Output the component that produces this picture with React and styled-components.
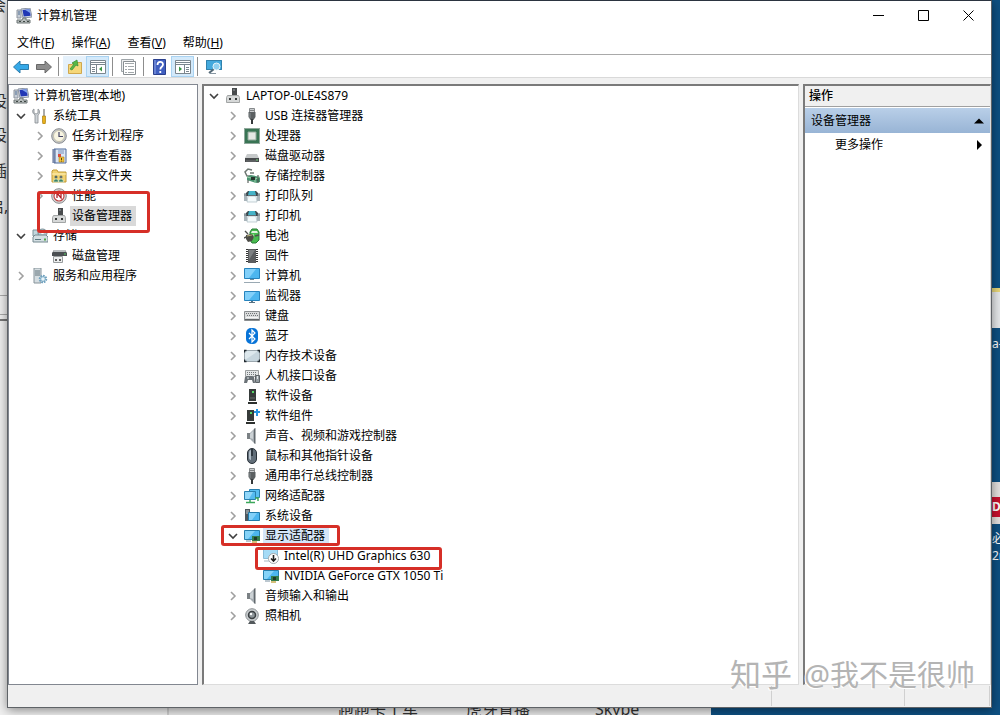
import React, { useState } from 'react'
import styled, { createGlobalStyle, css } from 'styled-components'

const GlobalStyle = createGlobalStyle`
  * {
    box-sizing: border-box;
  }

  body {
    margin: 0;
    overflow: hidden;
    color: #000;
    font-family: 'Noto Sans', 'Noto Sans CJK SC', sans-serif;
    font-size: 12px;
    line-height: 20px;
  }

  button {
    border: 0;
    padding: 0;
    background: none;
    color: inherit;
    font: inherit;
  }
`

// 16x16 drawings, shared by the trees, the toolbar and the title bar
const drawings = {
  computer: (
    <>
      <path d="M5 1l9-1 2 9-9 1z" fill="#d5dbe3" stroke="#8b95a5" />
      <path d="M6.500 2l7-.8 1.200 6.600-7 .8z" fill="#2137b5" />
      <path d="M9 1.800l4.500-.6 1 4z" fill="#7ea2ee" />
      <path d="M1 2h4v8H1z" fill="#c7ced7" stroke="#8d949e" />
      <path d="M2 4h2M2 6h2" stroke="#4f6d91" />
      <path d="M1 12h5l1-2h3v2h4v3H1z" fill="#b7bdbd" stroke="#6f7776" />
      <path d="M3 13.500h2M7 13.500h2M11 13.500h2" stroke="#404945" />
    </>
  ),
  tools: (
    <>
      <path
        d="M2 1v4l2 1 2-1V1c2 1 2 5 0 6v8H3V7C0 5 0 2 2 1z"
        fill="#cfd4d8"
        stroke="#868c91"
        strokeWidth=".8"
      />
      <path d="M11 1h2v8h-2z" fill="#aaa" />
      <path d="M10.500 8h3v6l-.5 2h-2l-.5-2z" fill="#e8b01c" stroke="#a97f12" strokeWidth=".7" />
    </>
  ),
  clock: (
    <>
      <circle cx="8" cy="8" r="7.300" fill="#c4c8cb" stroke="#8a8c8f" />
      <circle cx="8" cy="8" r="5.500" fill="#f8f5e2" stroke="#b9b39b" strokeWidth=".7" />
      <path d="M8 4v4.500h4" fill="none" stroke="#446" strokeWidth="1.200" />
    </>
  ),
  events: (
    <>
      <path d="M3 1h12v14H3z" fill="#dbe6f4" stroke="#4e6b9c" />
      <path d="M1 2h4M1 4h4M1 6h4M1 8h4M1 10h4M1 12h4M1 14h4" stroke="#53648d" />
      <path d="M7 3h6M7 5h6" stroke="#7890ba" />
      <path d="M7 6h3v3H7z" fill="#dc4b3b" />
      <path d="M8 9h5v5H8z" fill="#f1c53e" stroke="#ad7e1d" strokeWidth=".6" />
      <path d="M10.500 10v2M10.500 12.700v.8" stroke="#5b4312" />
    </>
  ),
  share: (
    <>
      <path d="M1 3l1-1h4l1 2h8v10H1z" fill="#f1d270" stroke="#c29b35" />
      <path d="M1 6h14" stroke="#fff2bd" />
      <circle cx="5" cy="9" r="1.500" fill="#546c63" />
      <circle cx="10" cy="9" r="1.500" fill="#65716d" />
      <path d="M2.500 14c0-4 5-4 5 0zM7.500 14c0-4 5-4 5 0z" fill="#398269" stroke="#dce9c9" strokeWidth=".7" />
    </>
  ),
  perf: (
    <>
      <circle cx="8" cy="8" r="7.300" fill="#d7d7d7" stroke="#8a8c8f" />
      <circle cx="8" cy="8" r="5" fill="#fff" stroke="#c04545" strokeWidth="1.200" />
      <path d="M6 5v5M6 5l4 5V6" fill="none" stroke="#b11d24" strokeWidth="1.300" />
    </>
  ),
  device: (
    <>
      <path d="M7 0h5v9H7z" fill="#484b4d" />
      <path d="M8 2h2" stroke="#9da6aa" />
      <path d="M2.500 7.500h11l1 2v5h-13v-5z" fill="#d6d8d8" stroke="#a2a5a5" />
      <path d="M4 10h2v2H4zM10 10h2v2h-2z" fill="#353838" />
    </>
  ),
  storage: (
    <>
      <path d="M1 2h7v6H1z" fill="#c3d8de" stroke="#7c9299" />
      <ellipse cx="10.500" cy="5" rx="4.500" ry="4" fill="#b7cad1" stroke="#768b94" />
      <circle cx="10.500" cy="5" r="1.300" fill="#fff" />
      <path d="M1 9l2-2h11l2 2v5H1z" fill="#d4dfe3" stroke="#748990" />
      <path d="M3 11.500h6" stroke="#5a777f" />
      <path d="M12 11.500h2" stroke="#4fa348" strokeWidth="2" />
    </>
  ),
  disks: (
    <>
      <path d="M3 2h11l2 3v3H1V5z" fill="#4b4f52" />
      <path d="M3 2h11l1 2H2z" fill="#b9bdbf" />
      <path d="M13 6h2" stroke="#58cb65" />
      <path d="M2.500 8.500h9v6h-9z" fill="#eceeee" stroke="#999d9e" />
      <path d="M5 11v2M9 11v2" stroke="#333" strokeWidth="1.500" />
    </>
  ),
  services: (
    <>
      <path d="M2 0h7v15H2z" fill="#d5dde1" stroke="#86939a" />
      <path d="M3 3h5M3 5h5M3 7h5" stroke="#61727a" />
      <circle cx="11" cy="11" r="3" fill="#e8f5fb" stroke="#6fa2c0" strokeWidth="2.500" strokeDasharray="1.500 .8" />
      <circle cx="11" cy="11" r="2.300" fill="#e8f5fb" stroke="#7eabc4" />
    </>
  ),
  usb: (
    <>
      <path d="M5.500 .5h5v4h-5z" fill="#c9ccce" stroke="#85898b" />
      <path d="M7 2v1M9 2v1" stroke="#34383a" />
      <path d="M4.500 4h7v5l-2 3h-3l-2-3z" fill="#5b6062" />
      <path d="M6 5v5" stroke="#868c8f" />
      <path d="M8 11v5" stroke="#35393b" strokeWidth="2" />
    </>
  ),
  cpu: (
    <>
      <path d="M1 1h14v14H1z" fill="#397454" />
      <path d="M.5 .5h15v15H.5z" fill="none" stroke="#1f5136" strokeDasharray="1 1" />
      <path d="M4 4h8v8H4z" fill="#e5e8e5" stroke="#93aa9c" />
    </>
  ),
  drive: (
    <>
      <path d="M3 6h10l2 4H1z" fill="#c6c9ca" />
      <path d="M1 10h14v4H1z" fill="#484b4d" />
      <path d="M2 13h10" stroke="#707476" />
      <path d="M12 12h2" stroke="#7edd83" />
    </>
  ),
  controller: (
    <>
      <path d="M8 2L4 1 1 4l2 4h4M6 5h4" fill="none" stroke="#6e7873" strokeWidth="1.500" />
      <path d="M3 9l4-2 9 2v5l-4 1-9-3z" fill="#4a9270" />
      <path d="M3 9l8 2v4M11 11l5-2" stroke="#9bd1aa" fill="none" />
      <path d="M4 12v3M14 7v8" stroke="#3e4641" />
      <path d="M7 9h4v3H7z" fill="#27362e" />
    </>
  ),
  printer: (
    <>
      <path d="M0 5h3v8H0zM13 5h3v8h-3z" fill="#a9b4ba" />
      <path d="M2 5l2-2h8l2 2v3H2z" fill="#3b474d" />
      <path d="M5 3h6l1 4H4z" fill="#45b3c8" />
      <path d="M0 7h3M13 7h3" stroke="#6d797f" />
      <path d="M4 8h8l1 6H3z" fill="#f4fafc" stroke="#a9bac1" strokeWidth=".7" />
    </>
  ),
  battery: (
    <>
      <path d="M8 1h5l2 3v8l-3 3H8L6 12V4z" fill="#48bb50" stroke="#287a36" />
      <path d="M8 3h5l1 2H7z" fill="#e0f2df" />
      <path d="M9 6v4" stroke="#a4eda1" strokeWidth="1.500" />
      <path d="M1 3l3 3M0 10l4-2M11 8l4-1" stroke="#4f514f" strokeWidth="1.400" />
      <path d="M2 7l6-1 2 3-2 4-4 1-2-3z" fill="#4c4c46" />
      <path d="M3 8l5-1" stroke="#b2ab73" />
    </>
  ),
  chip: (
    <>
      <path d="M4 1h8v14H4z" fill="#5b5d5f" />
      <path d="M3 1v14M13 1v14" stroke="#333" strokeWidth="2" strokeDasharray="1 1" />
      <path d="M5 2h6L5 12z" fill="#7d8082" />
    </>
  ),
  pc: (
    <>
      <path d="M.5 .5h15v10H.5z" fill="#4db6ef" stroke="#2683bd" />
      <path d="M1 1h11L5 10H1z" fill="#82d0fa" />
      <path d="M6 11h4v1H6z" fill="#718c9c" />
      <path d="M0 14.500h16" stroke="#9aa9b3" />
    </>
  ),
  monitor: (
    <>
      <path d="M.5 3.500h15v9H.5z" fill="#4db6ef" stroke="#2683bd" />
      <path d="M1 4h11L5 12H1z" fill="#82d0fa" />
      <path d="M7 13h2v1h2v1H5v-1h2z" fill="#577284" />
    </>
  ),
  keyboard: (
    <>
      <path d="M.5 3.500h15v9H.5z" fill="#d9dbdc" stroke="#8a8e90" />
      <path d="M2 5.500h12M3 7.500h11" stroke="#707476" strokeDasharray="1 1" />
      <path d="M2 9.500h12" stroke="#f5f6f6" />
      <path d="M1 11.500h14" stroke="#606466" />
    </>
  ),
  bluetooth: (
    <>
      <rect x="2" y="0" width="12" height="16" rx="5" fill="#0874d8" />
      <path d="M5 5l6 6-3 3V2l3 3-6 6" fill="none" stroke="#fff" strokeWidth="1.200" />
    </>
  ),
  memory: (
    <>
      <path d="M.5 2.500h15v11H.5z" fill="#c7d6de" stroke="#9aa6ad" />
      <path d="M1 3h13L1 12z" fill="#dde8ed" />
      <path d="M.5 4.500v-2H2.500M13.500 2.500h2v2M15.500 11.500v2h-2M2.500 13.500h-2v-2" fill="none" stroke="#222b31" strokeWidth="1.400" />
    </>
  ),
  hid: (
    <>
      <path d="M1.500 2.500h13v6h-13z" fill="#e3e6e7" stroke="#9a9e9f" />
      <path d="M3 4.500h10M3 6.500h10" stroke="#74797b" strokeDasharray="1 1" />
      <path d="M1 9l2-1h5l2 1 1 6H9l-1-3H4l-1 3H0z" fill="#6b7277" />
      <path d="M11.500 7.500h4v7h-4z" fill="#939ba0" stroke="#5d6367" />
      <path d="M13.500 8v3M3 10h2" stroke="#e0e5e8" />
    </>
  ),
  tower: (
    <>
      <path d="M5 1h7v12H5z" fill="#363b3a" />
      <path d="M4 14h9v2H4z" fill="#2c302e" />
      <path d="M8 3h2v2H8z" fill="#57d668" />
      <path d="M6 10h5" stroke="#676e6b" />
    </>
  ),
  component: (
    <>
      <path d="M3 2h7v11H3z" fill="#363b3a" />
      <path d="M2 14h9v2H2z" fill="#2c302e" />
      <path d="M6 4h2v2H6z" fill="#57d668" />
      <path d="M10 3h2V1h2v2h2v2h-2v3h-2V5h-2z" fill="#2695e0" />
    </>
  ),
  speaker: (
    <>
      <path d="M3 5h3v6H3z" fill="#7b8185" />
      <path d="M6 5l5-5v16l-5-5z" fill="#a4abb0" />
      <path d="M10 1l1.500-1v16L10 15z" fill="#61686d" />
      <path d="M6 6l3-3v8l-3-1z" fill="#ccd2d5" />
    </>
  ),
  mouse: (
    <>
      <rect x="3.500" y=".5" width="9" height="15" rx="4.500" fill="#626e79" stroke="#293139" />
      <path d="M5 5c0-2 1-3 2-3v10c-1 0-2-1-2-2z" fill="#b2bec8" />
      <path d="M8 1v7" stroke="#1f272e" strokeWidth="1.500" />
    </>
  ),
  network: (
    <>
      <path d="M5.500 1.500h10v8h-10z" fill="#59bff2" stroke="#287faf" />
      <path d="M.5 3.500h11v8H.5z" fill="#54bbf1" stroke="#287faf" />
      <path d="M1 4h8l-4 7H1z" fill="#91d7fa" />
      <path d="M6 12v2M2 14.500h9M11 10h3v3" stroke="#3ca75b" fill="none" strokeWidth="1.500" />
    </>
  ),
  system: (
    <>
      <path d="M1 1h5v12H1z" fill="#4e585f" />
      <path d="M2 3h3M2 5h3" stroke="#c3cdd2" />
      <path d="M4.500 4.500h11v8h-11z" fill="#4db6ef" stroke="#227bab" />
      <path d="M5 5h8l-5 7H5z" fill="#83d0f8" />
    </>
  ),
  display: (
    <>
      <path d="M.5 2.500h15v9H.5z" fill="#4db6ef" stroke="#277fac" />
      <path d="M1 3h10L4 11H1z" fill="#86d3f8" />
      <path d="M2 13h5" stroke="#7890a0" />
      <path d="M8 8h8v5H8z" fill="#347d4c" />
      <path d="M10 9h3v3h-3z" fill="#203b2b" />
      <path d="M8 14h5" stroke="#c9ad4f" strokeWidth="1.500" />
    </>
  ),
  disabled: (
    <>
      <path d="M.5 1.500h14v9H.5z" fill="#a5dbf6" stroke="#8abdda" />
      <path d="M1 13h5" stroke="#a8b7bf" />
      <circle cx="10.500" cy="10.500" r="5" fill="#fff" stroke="#a2a8ab" />
      <path d="M10.500 7v6M8 10.500l2.500 2.500 2.500-2.500" fill="none" stroke="#222" strokeWidth="1.600" />
    </>
  ),
  camera: (
    <>
      <circle cx="8" cy="7" r="6.300" fill="#c9cdcf" stroke="#8a8f92" />
      <circle cx="8" cy="7" r="3.500" fill="#8f979b" stroke="#3a3f42" strokeWidth="1.500" />
      <circle cx="7" cy="6" r="1.200" fill="#fff" />
      <path d="M6 13h4l2 3H4z" fill="#53595c" />
    </>
  ),
  back: (
    <path d="M.5 8L7 2v3.500h8.500v5H7V14z" fill="#36a9e8" stroke="#2d7cab" strokeLinejoin="round" />
  ),
  forward: (
    <path d="M15.500 8L9 2v3.500H.5v5H9V14z" fill="#8d8d8d" stroke="#686868" strokeLinejoin="round" />
  ),
  up: (
    <>
      <path d="M1.500 5.500h4l1-2h8v11h-13z" fill="#f5d779" stroke="#d0a84e" />
      <path d="M3 10l4-5-2-1 5-3 1 6-2-1-4 5z" fill="#58b947" stroke="#348d31" strokeWidth=".7" />
    </>
  ),
  paneLeft: (
    <>
      <path d="M.5 1.500h15v13H.5z" fill="#fff" stroke="#7b868e" />
      <path d="M1 3.500h14M1 5.500h14M6.500 6v8" stroke="#7b868e" />
      <path d="M2 8.500h3M2 10.500h3M2 12.500h3" stroke="#7b868e" />
      <path d="M12 7.500v5L9 10z" fill="#3b9746" />
    </>
  ),
  paneRight: (
    <>
      <path d="M.5 1.500h15v13H.5z" fill="#fff" stroke="#7b868e" />
      <path d="M1 3.500h14M1 5.500h14M9.500 6v8" stroke="#7b868e" />
      <path d="M11 8.500h3M11 10.500h3M11 12.500h3" stroke="#7b868e" />
      <path d="M4 7.500v5L7 10z" fill="#3b9746" />
    </>
  ),
  properties: (
    <>
      <path d="M.5 .5h12v12H.5z" fill="#eceeef" stroke="#9fa5a9" />
      <path d="M2.500 2.500h12v13h-12z" fill="#fff" stroke="#888e92" />
      <path d="M4 4.500h9M4 7.500h2M4 10.500h2M4 13.500h2M7 7.500h6M7 10.500h6M7 13.500h6" stroke="#a2a8ab" />
    </>
  ),
  help: (
    <>
      <path d="M1.500 .5h12v15h-12z" fill="#405fc0" stroke="#2b408d" />
      <path d="M3 1v14" stroke="#8fa7e7" />
      <path d="M5.500 6c0-4 5.500-4 5.500-.5C11 8 8.300 7.500 8.300 10.500M8.300 12v2" fill="none" stroke="#fff" strokeWidth="1.800" />
    </>
  ),
  scan: (
    <>
      <path d="M0 1h16v10H0z" fill="#43a9dd" />
      <path d="M.5 1.500h15v9H.5z" fill="none" stroke="#3181ac" />
      <path d="M4 14.500h6" stroke="#8897a2" />
      <path d="M8 10l-5 4" stroke="#566b79" strokeWidth="2" />
      <circle cx="10.500" cy="7.500" r="3.500" fill="#8fd0f0" stroke="#e7f5fa" />
    </>
  )
}

const localTree = {
  icon: 'computer',
  text: '计算机管理(本地)',
  children: [
    {
      icon: 'tools',
      text: '系统工具',
      open: true,
      children: [
        { icon: 'clock', text: '任务计划程序', children: [] },
        { icon: 'events', text: '事件查看器', children: [] },
        { icon: 'share', text: '共享文件夹', children: [] },
        { icon: 'perf', text: '性能', children: [] },
        { icon: 'device', text: '设备管理器', selected: '#d9d9d9', mark: '-15px -14px -7px -14px' }
      ]
    },
    {
      icon: 'storage',
      text: '存储',
      open: true,
      children: [{ icon: 'disks', text: '磁盘管理' }]
    },
    { icon: 'services', text: '服务和应用程序', children: [] }
  ]
}

const deviceTree = {
  icon: 'device',
  text: 'LAPTOP-0LE4S879',
  open: true,
  children: [
    { icon: 'usb', text: 'USB 连接器管理器', children: [] },
    { icon: 'cpu', text: '处理器', children: [] },
    { icon: 'drive', text: '磁盘驱动器', children: [] },
    { icon: 'controller', text: '存储控制器', children: [] },
    { icon: 'printer', text: '打印队列', children: [] },
    { icon: 'printer', text: '打印机', children: [] },
    { icon: 'battery', text: '电池', children: [] },
    { icon: 'chip', text: '固件', children: [] },
    { icon: 'pc', text: '计算机', children: [] },
    { icon: 'monitor', text: '监视器', children: [] },
    { icon: 'keyboard', text: '键盘', children: [] },
    { icon: 'bluetooth', text: '蓝牙', children: [] },
    { icon: 'memory', text: '内存技术设备', children: [] },
    { icon: 'hid', text: '人机接口设备', children: [] },
    { icon: 'tower', text: '软件设备', children: [] },
    { icon: 'component', text: '软件组件', children: [] },
    { icon: 'speaker', text: '声音、视频和游戏控制器', children: [] },
    { icon: 'mouse', text: '鼠标和其他指针设备', children: [] },
    { icon: 'usb', text: '通用串行总线控制器', children: [] },
    { icon: 'network', text: '网络适配器', children: [] },
    { icon: 'system', text: '系统设备', children: [] },
    {
      icon: 'display',
      text: '显示适配器',
      open: true,
      selected: '#d5e5f8',
      mark: '-1px -11px 0 -23px',
      children: [
        { icon: 'disabled', text: 'Intel(R) UHD Graphics 630', mark: '1px -8px -4px -8px' },
        { icon: 'display', text: 'NVIDIA GeForce GTX 1050 Ti' }
      ]
    },
    { icon: 'speaker', text: '音频输入和输出', children: [] },
    { icon: 'camera', text: '照相机', children: [] }
  ]
}

const Icon = ({ name }) => (
  <Drawing viewBox="0 0 16 16" aria-hidden="true">
    {drawings[name]}
  </Drawing>
)

function TreeNode({ node, base, depth = 0 }) {
  const [open, setOpen] = useState(node.open || false)
  // the console root has no arrow and is always open
  const hasToggle = node.children && !(depth === 0 && !node.open)
  const showChildren = node.children && (open || !hasToggle)

  return (
    <li>
      <Row $left={base + depth * 19}>
        <Item>
          {hasToggle && (
            <Toggle
              type="button"
              aria-label={node.text}
              aria-expanded={open}
              onClick={() => setOpen(!open)}
            >
              <Chevron viewBox="0 0 10 10" $open={open}>
                <path d={open ? 'M1 3l4 4 4-4' : 'M3 1l4 4-4 4'} />
              </Chevron>
            </Toggle>
          )}
          <Icon name={node.icon} />
          <Label $selected={node.selected}>{node.text}</Label>
          {node.mark && <Mark $inset={node.mark} />}
        </Item>
      </Row>
      {showChildren && (
        <TreeList>
          {node.children.map((child, i) => (
            <TreeNode key={i} node={child} base={base} depth={depth + 1} />
          ))}
        </TreeList>
      )}
    </li>
  )
}

const menus = [
  ['文件', 'F'],
  ['操作', 'A'],
  ['查看', 'V'],
  ['帮助', 'H']
]

function App() {
  return (
    <Desktop>
      <GlobalStyle />
      <Page>
        <Scrap $x={-10} $y={-5}>会</Scrap>
        <Scrap $x={-9} $y={91}>设</Scrap>
        <Scrap $x={-9} $y={125}>设</Scrap>
        <Scrap $x={-9} $y={161}>插</Scrap>
        <Scrap $x={-12} $y={196}>启,</Scrap>
        <Rule $y={295} />
        <Rule $y={314} />
        <Rule $y={319} $dark />
        <Scrap $x={338} $y={700}>跑跑卡丁车</Scrap>
        <Scrap $x={466} $y={700}>虎牙直播</Scrap>
        <Scrap $x={595} $y={699}>Skype</Scrap>
      </Page>
      <Shortcut $y={288} $height={40} $fill="linear-gradient(#e8d77a 4px, #e6e8ea 4px)" />
      <Caption $y={334}>a-</Caption>
      <Shortcut $y={482} $height={42} $fill="#e5e1df">
        <Badge>D</Badge>
      </Shortcut>
      <Caption $y={529}>必</Caption>
      <Caption $y={546}>2r</Caption>

      <Window>
        <TitleBar>
          <Icon name="computer" />
          <Title>计算机管理</Title>
          <WindowButton type="button" aria-label="最小化">
            <Glyph viewBox="0 0 11 11">
              <path d="M0 5.500h11" />
            </Glyph>
          </WindowButton>
          <WindowButton type="button" aria-label="最大化">
            <Glyph viewBox="0 0 11 11">
              <path d="M.5 .5h10v10H.5z" />
            </Glyph>
          </WindowButton>
          <WindowButton type="button" aria-label="关闭">
            <Glyph viewBox="0 0 11 11">
              <path d="M.5 .5l10 10M10.500 .5l-10 10" />
            </Glyph>
          </WindowButton>
        </TitleBar>

        <MenuBar>
          {menus.map(([text, key]) => (
            <MenuItem type="button" key={key}>
              {text}(<u>{key}</u>)
            </MenuItem>
          ))}
        </MenuBar>

        <Toolbar>
          <Tool type="button" aria-label="后退"><Icon name="back" /></Tool>
          <Tool type="button" aria-label="前进"><Icon name="forward" /></Tool>
          <Separator />
          <Tool type="button" aria-label="向上" $tint><Icon name="up" /></Tool>
          <Tool type="button" aria-label="控制台树" $active><Icon name="paneLeft" /></Tool>
          <Separator />
          <Tool type="button" aria-label="属性"><Icon name="properties" /></Tool>
          <Separator />
          <Tool type="button" aria-label="帮助"><Icon name="help" /></Tool>
          <Tool type="button" aria-label="操作窗格" $active><Icon name="paneRight" /></Tool>
          <Separator />
          <Tool type="button" aria-label="扫描硬件改动"><Icon name="scan" /></Tool>
        </Toolbar>

        <Panes>
          <LeftPane>
            <TreeList>
              <TreeNode node={localTree} base={4} />
            </TreeList>
          </LeftPane>
          <SunkenPane>
            <TreeList>
              <TreeNode node={deviceTree} base={21} />
            </TreeList>
          </SunkenPane>
          <SunkenPane as="aside">
            <ActionsTitle>操作</ActionsTitle>
            <ActionsGroup type="button">
              设备管理器
              <Arrow viewBox="0 0 10 10"><path d="M0 7.500h10L5 2.500z" /></Arrow>
            </ActionsGroup>
            <ActionsItem type="button">
              更多操作
              <Arrow viewBox="0 0 10 10"><path d="M3 0v10l5-5z" /></Arrow>
            </ActionsItem>
          </SunkenPane>
        </Panes>

        <StatusBar>
          <StatusCell />
          <StatusCell $width="133px" />
          <StatusCell $width="85px" />
        </StatusBar>
      </Window>

      <Watermark>
        <Brand>知乎</Brand>
        <span>@我不是很帅</span>
      </Watermark>
    </Desktop>
  )
}

export default App

const Desktop = styled.div`
  position: relative;
  display: flex;
  height: 100vh;
  padding: 0 8px 7px 7px;
  overflow: hidden;
  background: #0e5082;
`

// the browser page that shows round the window's edges
const Page = styled.div`
  position: absolute;
  inset: 0 auto 0 0;
  width: 711px;
  overflow: hidden;
  background: linear-gradient(90deg, #f0f0f0 167px, #cfcfcf 167px, #cfcfcf 169px, #e9e9e9 169px);
`

const Scrap = styled.span`
  position: absolute;
  left: ${props => props.$x}px;
  top: ${props => props.$y}px;
  color: #333;
  font-size: 16px;
  white-space: nowrap;
`

const Rule = styled.span`
  position: absolute;
  left: 0;
  top: ${props => props.$y}px;
  width: 8px;
  height: ${props => (props.$dark ? 2 : 1)}px;
  background: ${props => (props.$dark ? '#777' : '#aaa')};
`

const Shortcut = styled.div`
  position: absolute;
  right: 0;
  top: ${props => props.$y}px;
  display: flex;
  align-items: center;
  width: 8px;
  height: ${props => props.$height}px;
  overflow: hidden;
  background: ${props => props.$fill};
`

const Badge = styled.b`
  margin-top: 8px;
  padding-right: 8px;
  background: #c8102e;
  color: #fff;
`

const Caption = styled.span`
  position: absolute;
  right: 0;
  top: ${props => props.$y}px;
  width: 8px;
  overflow: hidden;
  color: #fff;
  white-space: nowrap;
`

const Window = styled.main`
  position: relative;
  display: flex;
  flex: 1;
  flex-direction: column;
  min-width: 0;
  border: 1px solid #5f6367;
  border-top-color: #2b3440;
  background: #fff;
  box-shadow: 0 2px 10px rgba(0, 0, 0, 0.45);
`

const Drawing = styled.svg`
  flex: none;
  width: 16px;
  height: 16px;
`

const TitleBar = styled.header`
  display: flex;
  align-items: center;
  height: 29px;
  padding-left: 8px;
`

const Title = styled.h1`
  flex: 1;
  margin: 0 0 0 5px;
  font-size: 12px;
  font-weight: 400;
`

const WindowButton = styled.button`
  width: 45px;
  height: 28px;
`

const Glyph = styled.svg`
  display: block;
  width: 11px;
  height: 11px;
  margin: 0 auto;
  fill: none;
  stroke: #000;
`

const MenuBar = styled.nav`
  display: flex;
  gap: 17px;
  height: 25px;
  padding: 2px 0 0 9px;
  border-bottom: 1px solid #a9a9a9;
`

const MenuItem = styled.button`
  white-space: nowrap;
`

const Toolbar = styled.div`
  display: flex;
  align-items: flex-end;
  height: 23px;
  padding-left: 1px;
  border-bottom: 1px solid #d9d9d9;
`

const Tool = styled.button`
  display: flex;
  align-items: center;
  justify-content: center;
  width: 23px;
  height: 21px;
  border: 1px solid transparent;

  ${props =>
    props.$tint &&
    css`
      background: #e5f1fb;
    `}

  ${props =>
    props.$active &&
    css`
      border-color: #a9d3f2;
      background: #d3e9fa;
    `}
`

const Separator = styled.span`
  width: 1px;
  height: 19px;
  margin: 0 4px 1px 3px;
  background: #8d8d8d;
`

const Panes = styled.div`
  display: grid;
  flex: 1;
  grid-template-columns: 190px 1fr 188px;
  gap: 4px;
  min-height: 0;
  padding-top: 6px;
  background: #f0f0f0;
`

const LeftPane = styled.section`
  border: 1px solid #828790;
  padding-top: 1px;
  background: #fff;
`

const SunkenPane = styled.section`
  border: 1px solid #dcdcdc;
  border-top: 2px solid #7a7a7a;
  border-left: 2px solid #7a7a7a;
  background: #fff;
`

const TreeList = styled.ul`
  margin: 0;
  padding: 0;
  list-style: none;
`

const Row = styled.div`
  display: flex;
  height: 20px;
  padding-left: ${props => props.$left}px;
`

const Item = styled.div`
  position: relative;
  display: flex;
  align-items: center;
  gap: 3px;
`

const Toggle = styled.button`
  width: 10px;
  height: 10px;
  margin: 0 3px 0 -16px;
`

const Chevron = styled.svg`
  display: block;
  width: 10px;
  height: 10px;
  fill: none;
  stroke: ${props => (props.$open ? '#404040' : '#a0a0a0')};
  stroke-width: 1.6;
`

const Label = styled.span`
  padding: 0 4px 0 2px;
  background: ${props => props.$selected || 'transparent'};
  white-space: nowrap;
`

const Mark = styled.span`
  position: absolute;
  z-index: 1;
  inset: ${props => props.$inset};
  border: 3px solid #d62f27;
  border-radius: 3px;
`

const ActionsTitle = styled.h2`
  height: 21px;
  margin: 0 0 1px;
  padding-left: 4px;
  border-bottom: 1px solid #a0a0a0;
  background: #f0f0f0;
  font-size: 12px;
  font-weight: 500;
`

const ActionsGroup = styled.button`
  display: flex;
  align-items: center;
  justify-content: space-between;
  width: 100%;
  height: 25px;
  padding: 0 6px;
  background: linear-gradient(#b9cfe8, #98b4d5);
`

const ActionsItem = styled.button`
  display: flex;
  align-items: center;
  justify-content: space-between;
  width: 100%;
  height: 24px;
  padding: 0 6px 0 30px;
`

const Arrow = styled.svg`
  width: 10px;
  height: 10px;
`

const StatusBar = styled.footer`
  display: flex;
  height: 22px;
  padding: 1px 1px 1px 0;
  background: #f0f0f0;
`

const StatusCell = styled.div`
  flex: ${props => (props.$width ? `0 0 ${props.$width}` : 1)};
  border-right: 1px solid #d0d0d0;
`

const Watermark = styled.div`
  position: absolute;
  right: 25px;
  bottom: 20px;
  display: flex;
  align-items: baseline;
  gap: 12px;
  color: #b4b4b4;
  font-size: 29px;
  line-height: 40px;
  text-shadow: -1px 1px 0 #fff;
  white-space: nowrap;
`

const Brand = styled.span`
  font-size: 31px;
`
